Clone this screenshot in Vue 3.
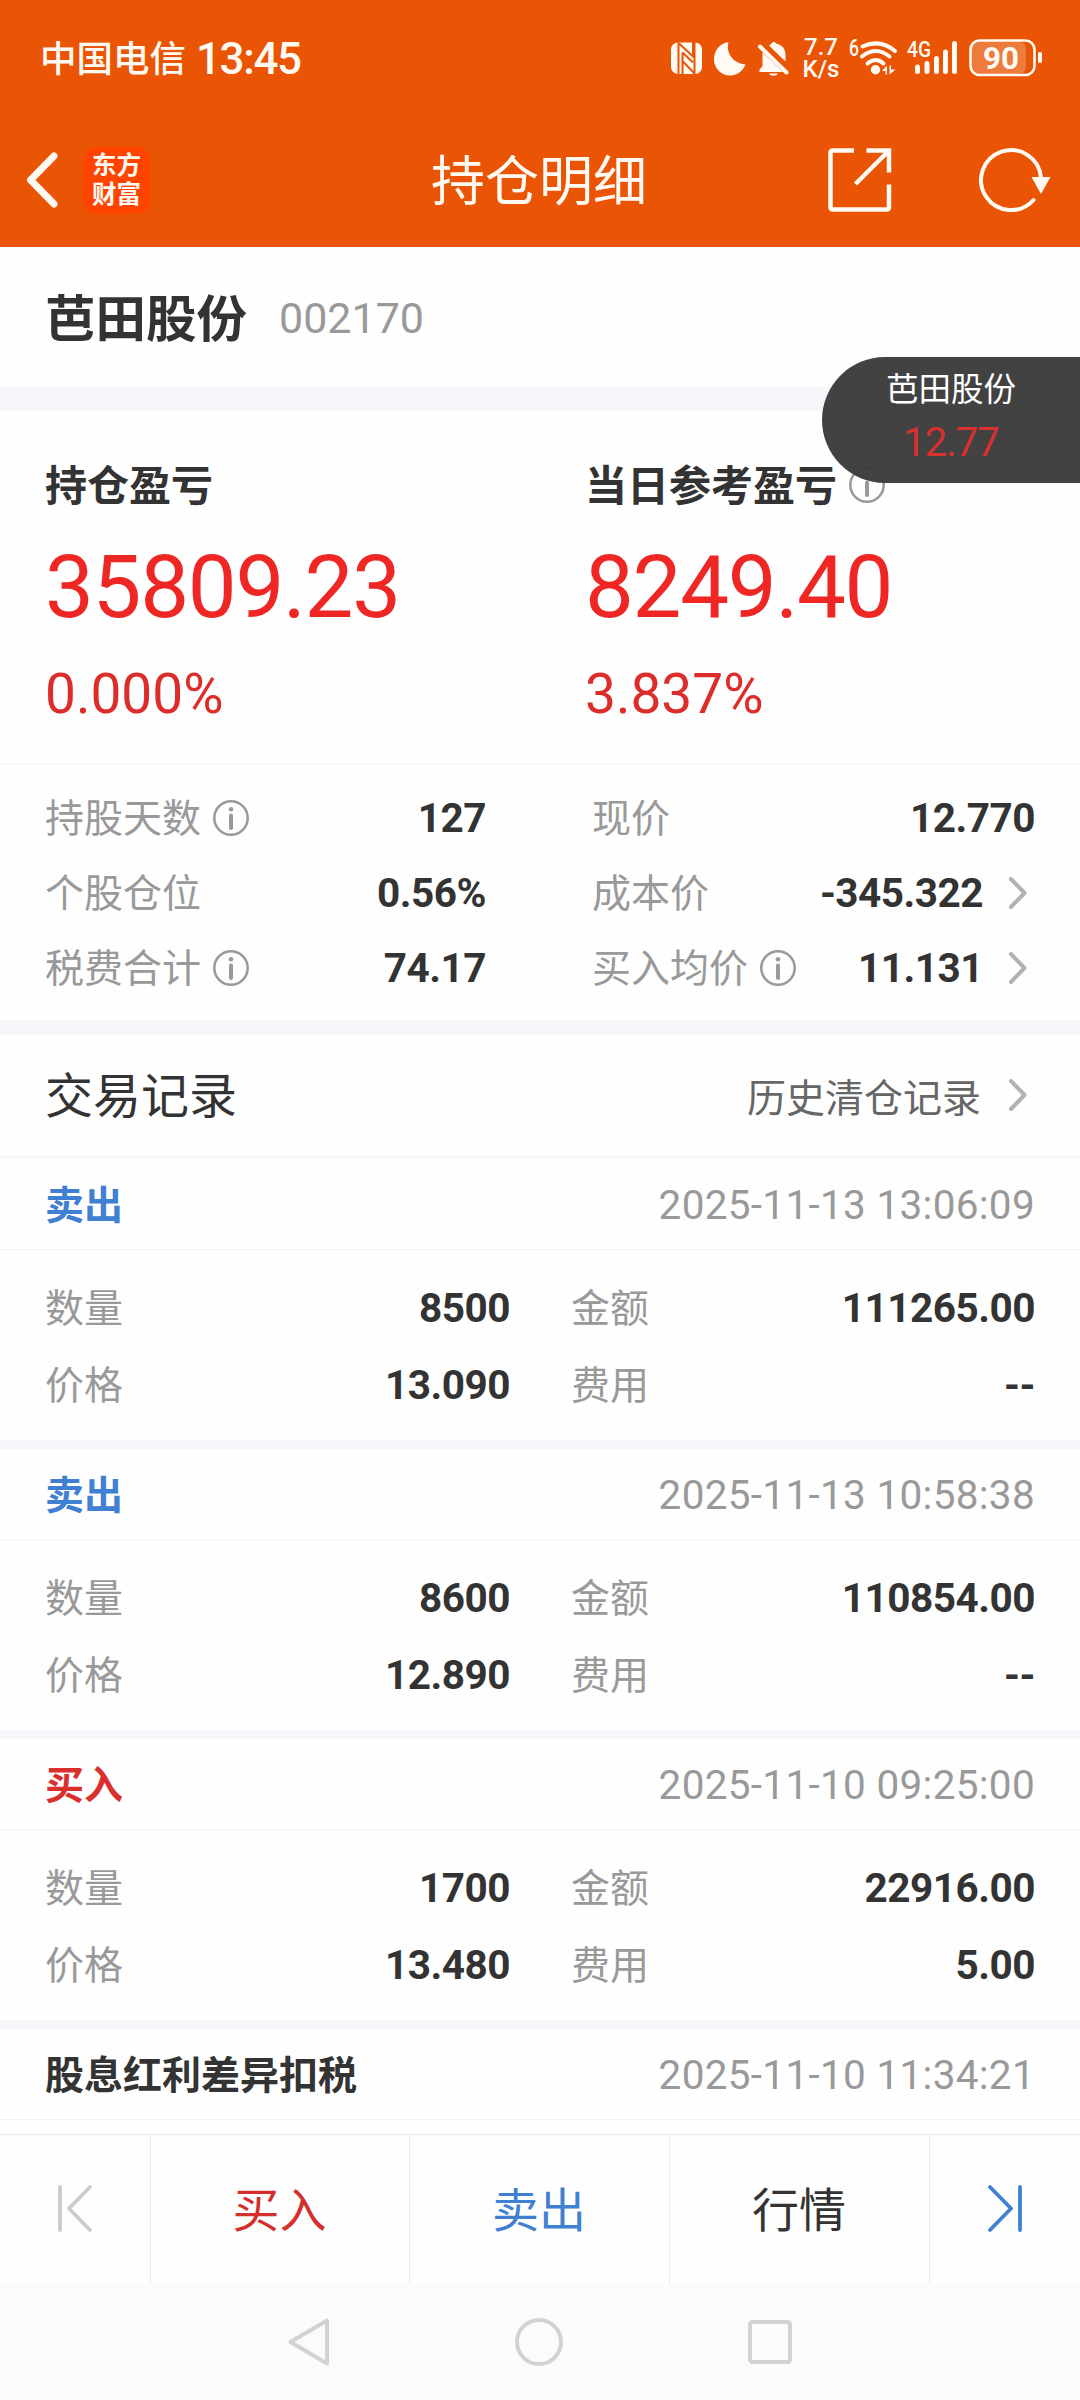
<script setup>
import { ref } from "vue";

const stock = { name: "芭田股份", code: "002170", price: "12.77" };

const profits = [
  { label: "持仓盈亏", value: "35809.23", percent: "0.000%" },
  { label: "当日参考盈亏", value: "8249.40", percent: "3.837%", info: true },
];

const stats = [
  { label: "持股天数", value: "127", info: true },
  { label: "现价", value: "12.770" },
  { label: "个股仓位", value: "0.56%" },
  { label: "成本价", value: "-345.322", arrow: true },
  { label: "税费合计", value: "74.17", info: true },
  { label: "买入均价", value: "11.131", info: true, arrow: true },
];

const records = ref([
  {
    type: "sell",
    title: "卖出",
    time: "2025-11-13 13:06:09",
    amount: "8500",
    total: "111265.00",
    price: "13.090",
    fee: "--",
  },
  {
    type: "sell",
    title: "卖出",
    time: "2025-11-13 10:58:38",
    amount: "8600",
    total: "110854.00",
    price: "12.890",
    fee: "--",
  },
  {
    type: "buy",
    title: "买入",
    time: "2025-11-10 09:25:00",
    amount: "1700",
    total: "22916.00",
    price: "13.480",
    fee: "5.00",
  },
  {
    type: "tax",
    title: "股息红利差异扣税",
    time: "2025-11-10 11:34:21",
  },
]);
</script>

<template>
  <div class="page">
    <svg class="symbols">
      <symbol id="info" viewBox="0 0 36 36">
        <circle cx="18" cy="18" r="16.7" fill="none" stroke="#999" stroke-width="2.5" />
        <circle cx="18" cy="9.3" r="2.3" fill="#999" />
        <path d="M18 15.5V28" stroke="#999" stroke-width="4" stroke-linecap="round" />
      </symbol>
      <symbol id="arrow" viewBox="0 0 20 34">
        <path
          d="M3 3L16.5 17L3 31"
          fill="none"
          stroke="#b2b2b2"
          stroke-width="4"
          stroke-linecap="round"
          stroke-linejoin="round"
        />
      </symbol>
    </svg>

    <header class="top">
      <div class="status">
        <span class="carrier">中国电信</span>
        <span class="clock">13:45</span>
        <div class="status-icons">
          <!-- nfc -->
          <svg width="31" height="40" viewBox="0 0 31 40">
            <rect x="0" y="4.5" width="31" height="31.5" rx="7" fill="#fffaf3" />
            <path
              d="M7.5 36V5L22 18.5V4M11.5 14.5V36M11.5 14.5L22 24.5M11.5 23L23.5 35.5V4"
              fill="none"
              stroke="#e95504"
              stroke-width="2"
            />
          </svg>
          <!-- do not disturb -->
          <svg width="32" height="40" viewBox="0 0 32 40">
            <path
              d="M14.5 4.3C12 13 17 25 31.5 26.5C29 33 23 37.5 16 37.5C7 37.5 0 30 0 21.5C0 12.5 6 5 14.5 4.3Z"
              fill="#fffaf3"
            />
          </svg>
          <!-- muted bell -->
          <svg width="31" height="40" viewBox="0 0 31 40">
            <path
              d="M11 7.5C12 6.5 13 6.3 13.5 5.5C14.5 3.5 17 3.5 18 5.5C24.5 7 27.5 11 27.5 17V23.5ZM4.5 14L25 34H1.500V31.500L4.500 28ZM11 35.500H20C18.500 38.500 12.500 38.500 11 35.500Z"
              fill="#fffaf3"
            />
            <path d="M2 8.500L28.500 34.500" stroke="#fffaf3" stroke-width="4" stroke-linecap="round" />
          </svg>
          <div class="speed"><span>7.7</span><span>K/s</span></div>
          <!-- wifi 6 -->
          <svg class="wifi" width="49" height="40" viewBox="0 0 49 40">
            <text x="0" y="18" class="svg-text" font-size="23" textLength="10" lengthAdjust="spacingAndGlyphs">6</text>
            <g fill="none" stroke="#fffaf3" stroke-width="4" stroke-linecap="round">
              <path d="M13.500 8.500Q31 0.500 46 13" />
              <path d="M13 18.500Q27 7.500 40.500 18.500" />
              <path d="M18.500 25.500Q27 18.500 34.500 25.500" />
            </g>
            <circle cx="26.500" cy="31.800" r="4.700" fill="#fffaf3" />
            <path d="M33 33L38 27.500V36.500H36.500V33ZM46.500 31.500L40.500 36.500V27.500H42V31.500Z" fill="#fffaf3" />
          </svg>
          <!-- mobile signal -->
          <svg width="50" height="40" viewBox="0 0 50 40">
            <text x="0" y="19" class="svg-text" font-size="22" textLength="24" lengthAdjust="spacingAndGlyphs">4G</text>
            <path
              d="M10.500 29V33.500M20 25.500V33.500M29.500 20.500V33.500M38.500 14V33.500M47.500 5.500V33.500"
              stroke="#fffaf3"
              stroke-width="5"
              stroke-linecap="round"
            />
          </svg>
          <!-- battery -->
          <svg width="73" height="40" viewBox="0 0 73 40">
            <rect x="2" y="3" width="55" height="34" rx="8" fill="#ed7b3c" />
            <rect x="1.500" y="2.500" width="64" height="34.500" rx="9" fill="none" stroke="#fffaf3" stroke-width="2.600" />
            <rect x="69" y="14" width="4" height="11" rx="1.800" fill="#fffaf3" />
            <text x="14" y="31" class="svg-text bold" font-size="31" textLength="36" lengthAdjust="spacingAndGlyphs">90</text>
          </svg>
        </div>
      </div>

      <nav class="navbar">
        <svg width="33" height="56" viewBox="0 0 33 56">
          <path
            d="M28 4L4.500 28L28 52"
            fill="none"
            stroke="#fffaf3"
            stroke-width="7"
            stroke-linecap="round"
            stroke-linejoin="round"
          />
        </svg>
        <div class="logo"><span>东方</span><span>财富</span></div>
        <h1>持仓明细</h1>
        <svg class="share" width="64" height="64" viewBox="0 0 64 64">
          <path
            d="M26 2.500H5Q2.500 2.500 2.500 5V59Q2.500 61.500 5 61.500H58.500Q61 61.500 61 59V36.500M38.500 2.500H61V24.500M60 3.500L27.500 36"
            fill="none"
            stroke="#fffaf3"
            stroke-width="4.500"
          />
        </svg>
        <svg width="72" height="64" viewBox="0 0 72 64">
          <path d="M61 30A30 30 0 1 0 53.500 52" fill="none" stroke="#fffaf3" stroke-width="4" stroke-linecap="round" />
          <path d="M51.500 29H70.500L61 46Z" fill="#fffaf3" />
        </svg>
      </nav>
    </header>

    <section class="stock">
      <h2>{{ stock.name }}</h2>
      <span>{{ stock.code }}</span>
    </section>

    <section class="profits">
      <div v-for="item in profits" :key="item.label" class="profit">
        <div class="profit-label">
          <span>{{ item.label }}</span>
          <svg v-if="item.info" class="info"><use href="#info" /></svg>
        </div>
        <div class="profit-value">{{ item.value }}</div>
        <div class="profit-percent">{{ item.percent }}</div>
      </div>
    </section>

    <section class="stats">
      <div v-for="item in stats" :key="item.label" class="stat">
        <span class="label">{{ item.label }}</span>
        <svg v-if="item.info" class="info"><use href="#info" /></svg>
        <span class="value">{{ item.value }}</span>
        <svg v-if="item.arrow" class="arrow"><use href="#arrow" /></svg>
      </div>
    </section>

    <section class="records-title">
      <h3>交易记录</h3>
      <span>历史清仓记录</span>
      <svg class="arrow"><use href="#arrow" /></svg>
    </section>

    <main class="records">
      <article v-for="item in records" :key="item.time" class="record">
        <div class="record-head">
          <span class="type" :class="item.type">{{ item.title }}</span>
          <span class="time">{{ item.time }}</span>
        </div>
        <div v-if="item.amount" class="record-body">
          <span class="label">数量</span>
          <span class="value">{{ item.amount }}</span>
          <span class="label">金额</span>
          <span class="value">{{ item.total }}</span>
          <span class="label">价格</span>
          <span class="value">{{ item.price }}</span>
          <span class="label">费用</span>
          <span class="value">{{ item.fee }}</span>
        </div>
      </article>
    </main>

    <footer class="actions">
      <button class="step">
        <svg width="36" height="50" viewBox="0 0 36 50">
          <path
            d="M3 3V46M33 3L12 24.500L33 46"
            fill="none"
            stroke="#ccc"
            stroke-width="3.800"
            stroke-linecap="round"
            stroke-linejoin="round"
          />
        </svg>
      </button>
      <button class="buy">买入</button>
      <button class="sell">卖出</button>
      <button>行情</button>
      <button class="step">
        <svg width="36" height="50" viewBox="0 0 36 50">
          <path
            d="M33 3V46M3 3L24 24.500L3 46"
            fill="none"
            stroke="#3f80d2"
            stroke-width="3.800"
            stroke-linecap="round"
            stroke-linejoin="round"
          />
        </svg>
      </button>
    </footer>

    <div class="system-nav">
      <svg width="44" height="50" viewBox="0 0 44 50">
        <path d="M40 3.500V46.500L3.500 25Z" fill="none" stroke="#d2d2d2" stroke-width="4" stroke-linejoin="round" />
      </svg>
      <svg width="50" height="50" viewBox="0 0 50 50">
        <circle cx="25" cy="25" r="22" fill="none" stroke="#d2d2d2" stroke-width="4" />
      </svg>
      <svg width="46" height="50" viewBox="0 0 46 50">
        <rect x="3" y="5" width="40" height="40" rx="2.500" fill="none" stroke="#d2d2d2" stroke-width="4" />
      </svg>
    </div>

    <aside class="floating">
      <span class="floating-name">{{ stock.name }}</span>
      <span class="floating-price">{{ stock.price }}</span>
    </aside>
  </div>
</template>

<style>
body {
  margin: 0;
  background: #fefefe;
}
</style>

<style scoped>
.page {
  position: relative;
  width: 1080px;
  height: 2400px;
  overflow: hidden;
  display: flex;
  flex-direction: column;
  background: #fefefe;
  color: #333;
  font-family: Roboto, "Noto Sans CJK SC", sans-serif;
}

.page > * {
  flex-shrink: 0;
  box-sizing: border-box;
}

h1,
h2,
h3 {
  margin: 0;
  font-weight: 400;
}

svg {
  flex-shrink: 0;
  overflow: visible;
}

.symbols {
  position: absolute;
  width: 0;
  height: 0;
}

.info {
  width: 36px;
  height: 36px;
}

.arrow {
  width: 20px;
  height: 34px;
}

.top {
  height: 247px;
  background: #e95504;
  color: #fffaf3;
}

.status {
  height: 116px;
  padding: 0 38px 0 40px;
  display: flex;
  align-items: center;
}

.carrier {
  padding-bottom: 4px;
  font-size: 36.5px;
  font-weight: 500;
}

.clock {
  margin-left: 10px;
  padding-top: 2px;
  font-size: 44px;
  font-weight: 500;
  letter-spacing: -1.4px;
}

.status-icons {
  margin-left: auto;
  display: flex;
  align-items: center;
  gap: 12px;
}

.speed {
  width: 34px;
  margin-left: 3px;
  margin-right: -1px;
  display: flex;
  flex-direction: column;
  align-items: center;
  font-size: 24px;
  font-weight: 500;
  line-height: 22px;
}

.wifi {
  margin-right: -3px;
}

.svg-text {
  fill: #fffaf3;
  font-weight: 500;
}

.svg-text.bold {
  font-weight: 700;
}

.navbar {
  height: 128px;
  padding: 0 28px 0 26px;
  display: flex;
  align-items: center;
}

.logo {
  width: 67px;
  height: 67px;
  margin-left: 24px;
  border-radius: 14px;
  background: #ff4400;
  display: flex;
  flex-direction: column;
  align-items: center;
  justify-content: center;
  font-size: 24.5px;
  font-weight: 700;
  line-height: 29px;
}

.navbar h1 {
  flex: 1;
  padding-left: 171px;
  padding-bottom: 5px;
  font-size: 54px;
  text-align: center;
}

.share {
  margin: 0 88px 0 71px;
}

.stock {
  height: 140px;
  padding: 0 45px;
  display: flex;
  align-items: center;
  gap: 32px;
}

.stock h2 {
  padding-bottom: 4px;
  font-size: 50.5px;
  font-weight: 700;
}

.stock span {
  padding-top: 1px;
  font-size: 43px;
  color: #999;
}

.profits {
  height: 378px;
  padding: 46px 45px 0;
  border-top: 24px solid #f5f7fa;
  border-bottom: 1px solid #f3f4f5;
  display: grid;
  grid-template-columns: 540px 1fr;
}

.profit-label {
  height: 56px;
  display: flex;
  align-items: center;
  gap: 12px;
  font-size: 42px;
  font-weight: 700;
}

.profit-label span {
  padding-bottom: 6px;
}

.profit-value {
  height: 98px;
  margin-top: 25px;
  line-height: 98px;
  font-size: 87px;
  letter-spacing: -1.3px;
  color: #ee2624;
}

.profit-percent {
  margin-top: 26px;
  line-height: 64px;
  font-size: 55px;
  color: #dc2d2b;
}

.stats {
  height: 255px;
  padding: 15px 45px 0;
  display: grid;
  grid-template-columns: 441px 1fr;
  grid-auto-rows: 75px;
  column-gap: 106px;
}

.stat {
  display: flex;
  align-items: center;
}

.label {
  padding-bottom: 5px;
  font-size: 39px;
  color: #999;
}

.stat .info {
  margin-left: 12px;
}

.value {
  margin-left: auto;
  padding-top: 1px;
  font-size: 40.5px;
  font-weight: 700;
  letter-spacing: -0.5px;
}

.stat .arrow {
  margin: 0 7px 0 25px;
}

.records-title {
  height: 139px;
  padding: 0 52px 0 45px;
  border-top: 15px solid #f5f7fa;
  border-bottom: 4px solid #f5f7fa;
  display: flex;
  align-items: center;
}

.records-title h3 {
  flex: 1;
  padding-bottom: 6px;
  font-size: 48px;
}

.records-title span {
  font-size: 39px;
  color: #666;
}

.records-title .arrow {
  margin-left: 27px;
}

.records {
  height: 975px;
  overflow: hidden;
}

.record-head {
  height: 90px;
  padding: 0 45px;
  border-bottom: 1px solid #f3f4f5;
  display: flex;
  align-items: center;
  justify-content: space-between;
}

.type {
  padding-bottom: 4px;
  font-size: 39px;
  font-weight: 700;
}

.sell {
  color: #3f80d2;
}

.buy {
  color: #d9302e;
}

.time {
  padding-top: 2px;
  font-size: 40.5px;
  letter-spacing: 0.3px;
  color: #999;
}

.record-body {
  height: 190px;
  padding: 19px 45px 17px;
  box-sizing: border-box;
  display: grid;
  grid-template-columns: 100px 365px 160px 365px;
  grid-template-rows: 77px 77px;
  align-items: center;
}

.record-body .label:nth-child(4n + 3) {
  padding-left: 61px;
}

.record + .record {
  border-top: 9px solid #f5f7fa;
}

.actions {
  height: 150px;
  border-top: 1px solid #ebebeb;
  display: grid;
  grid-template-columns: 151px 259px 260px 260px 150px;
}

.actions button {
  padding: 0 1px 6px 0;
  border: 0;
  border-right: 1px solid #ebebeb;
  background: none;
  display: flex;
  align-items: center;
  justify-content: center;
  font-family: inherit;
  font-size: 47px;
  color: #333;
}

.actions .step {
  padding: 0 0 2px;
}

.actions button:last-child {
  border-right: 0;
}

.actions .buy {
  color: #d52f2d;
}

.actions .sell {
  color: #3f80d2;
}

.system-nav {
  height: 116px;
  background: #fbfbfb;
  display: flex;
  align-items: center;
  justify-content: center;
  gap: 183px;
}

.floating {
  position: absolute;
  top: 357px;
  right: 0;
  width: 258px;
  height: 126px;
  box-sizing: border-box;
  padding: 5px 0 0 0;
  border-radius: 63px 0 0 63px;
  background: rgba(60, 60, 60, 0.97);
  display: flex;
  flex-direction: column;
  align-items: center;
}

.floating-name {
  height: 56px;
  line-height: 56px;
  font-size: 32.5px;
  color: #fff;
}

.floating-price {
  line-height: 50px;
  font-size: 40px;
  letter-spacing: -1px;
  color: #d93030;
}
</style>
